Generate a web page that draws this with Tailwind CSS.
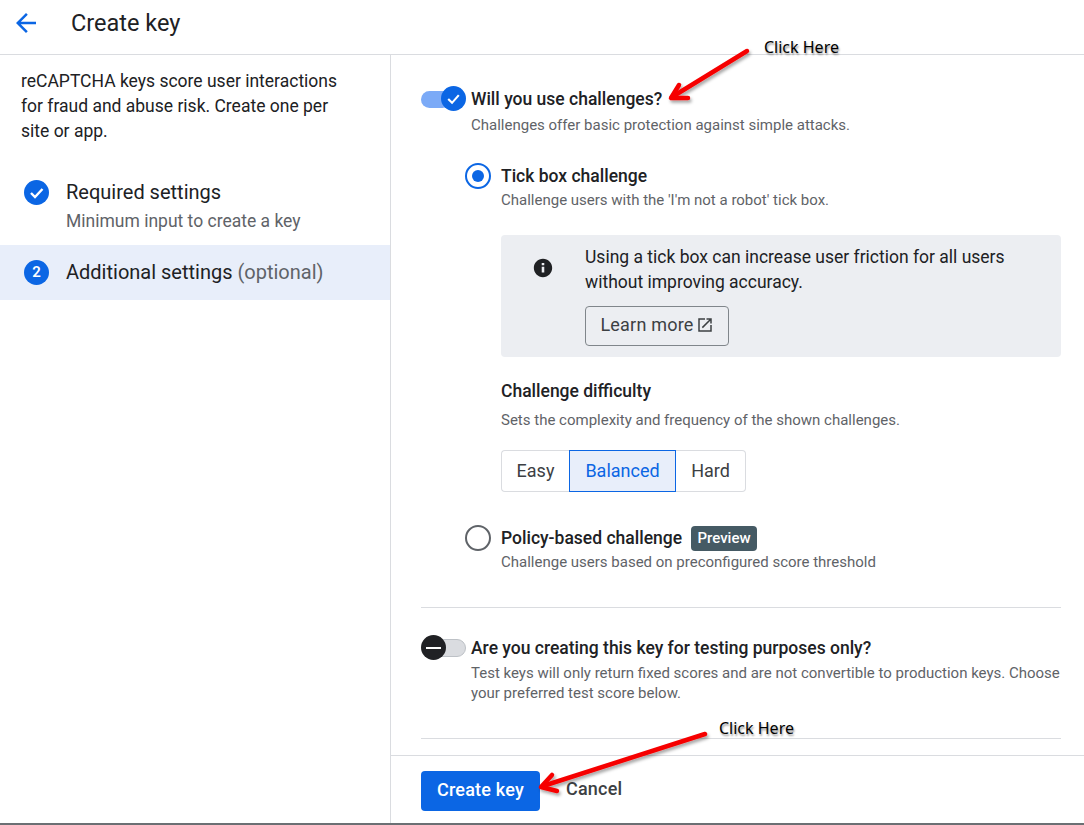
<!DOCTYPE html>
<html lang="en">
<head>
  <meta charset="UTF-8" />
  <title>Create key</title>
  <script src="https://cdn.jsdelivr.net/npm/@tailwindcss/browser@4"></script>
</head>
<body class="bg-white font-['Roboto',sans-serif] text-[#202124]">
<div class="relative w-[1084px] h-[825px] overflow-hidden flex flex-col">

  <!-- Header -->
  <header class="h-[55px] shrink-0 flex items-center border-b border-[#dadce0] pl-[11px] pb-[8px]">
    <svg class="w-[30px] h-[30px]" viewBox="0 0 24 24" fill="#0b66e4"><path d="M20 11H7.83l5.59-5.59L12 4l-8 8 8 8 1.41-1.41L7.83 13H20v-2z"/></svg>
    <h1 class="ml-[30px] text-[23.5px] leading-7">Create key</h1>
  </header>

  <div class="flex flex-1 min-h-0">
    <!-- Sidebar -->
    <aside class="w-[391px] shrink-0 border-r border-[#dadce0] pt-[14px]">
      <p class="px-[21px] w-[360px] text-[17.5px] leading-[25px]">reCAPTCHA keys score user interactions for fraud and abuse risk. Create one per site or app.</p>
      <div class="mt-[33px] h-[68px] flex pl-[24px]">
        <svg class="w-[25px] h-[25px] mt-[3px] shrink-0" viewBox="0 0 25 25"><circle cx="12.5" cy="12.5" r="12.5" fill="#0b66e4"/><path d="M7 13l4 4 7.5-8" fill="none" stroke="#fff" stroke-width="2.4"/></svg>
        <div class="ml-[17px]">
          <div class="text-[20px] leading-[30px]">Required settings</div>
          <div class="text-[17.5px] leading-[28px] text-[#5f6368]">Minimum input to create a key</div>
        </div>
      </div>
      <div class="h-[55px] flex items-center pl-[24px] bg-[#e8eefa]">
        <div class="w-[25px] h-[25px] rounded-full bg-[#0b66e4] text-white text-[15px] font-semibold flex items-center justify-center">2</div>
        <div class="ml-[17px] pb-px text-[20px]">Additional settings <span class="text-[#5f6368]">(optional)</span></div>
      </div>
    </aside>

    <!-- Main -->
    <main class="flex-1 flex flex-col min-w-0">
      <div class="flex-1 pl-[30px] pr-[23px] pt-[30px]">

        <div class="flex">
          <div class="relative w-[50px] h-7 shrink-0">
            <div class="absolute left-0 top-[6px] w-[30px] h-[17px] rounded-full bg-[#7baaf7]"></div>
            <svg class="absolute left-[20px] top-px w-[25px] h-[25px]" viewBox="0 0 26 26"><circle cx="13" cy="13" r="13" fill="#0b66e4"/><path d="M7.5 13.5l4 4 7-8" fill="none" stroke="#fff" stroke-width="2.2"/></svg>
          </div>
          <div>
            <div class="text-[17.5px] font-medium leading-7">Will you use challenges?</div>
            <div class="text-[15px] leading-[24px] text-[#5f6368]">Challenges offer basic protection against simple attacks.</div>
          </div>
        </div>

        <div class="ml-[44px] mt-[27px] flex">
          <div class="w-[26px] h-[26px] -mt-px shrink-0 rounded-full border-[2.5px] border-[#0b66e4] flex items-center justify-center">
            <div class="w-3 h-3 rounded-full bg-[#0b66e4]"></div>
          </div>
          <div class="ml-[10px] flex-1">
            <div class="text-[17.5px] font-medium leading-6">Tick box challenge</div>
            <div class="text-[15px] leading-6 text-[#5f6368]">Challenge users with the 'I'm not a robot' tick box.</div>

            <div class="mt-[23px] h-[122px] rounded bg-[#eceef2] flex pl-[31px] pt-[10px]">
              <svg class="w-[22px] h-[22px] mt-[12px] shrink-0" viewBox="0 0 24 24" fill="#202124"><path d="M12 2C6.48 2 2 6.48 2 12s4.48 10 10 10 10-4.48 10-10S17.52 2 12 2zm1.4 15h-2.8v-6.4h2.8V17zm0-8h-2.8V6.6h2.8V9z"/></svg>
              <div class="ml-[31px]">
                <p class="text-[17.5px] leading-[25px] w-[440px]">Using a tick box can increase user friction for all users without improving accuracy.</p>
                <div class="mt-[11px] w-[144px] h-10 pb-[2px] rounded border border-[#80868b] flex items-center justify-center text-lg tracking-[0.2px] text-[#3c4043]">
                  Learn more
                  <svg class="w-[18px] h-[18px] ml-[2px]" viewBox="0 0 24 24" fill="#3c4043"><path d="M19 19H5V5h7V3H3v18h18v-9h-2v7zM14 3v2h3.59l-9.83 9.83 1.41 1.41L19 6.41V10h2V3h-7z"/></svg>
                </div>
              </div>
            </div>

            <div class="mt-[22px] text-[17.5px] font-medium leading-6">Challenge difficulty</div>
            <div class="mt-[5px] text-[15px] leading-6 text-[#5f6368]">Sets the complexity and frequency of the shown challenges.</div>

            <div class="mt-[18px] inline-flex h-[42px] text-lg text-[#3c4043]">
              <div class="w-[68px] pb-px flex items-center justify-center rounded-l border border-r-0 border-[#dadce0]">Easy</div>
              <div class="w-[107px] pb-px flex items-center justify-center border border-[#0b66e4] bg-[#e8eefa] text-[#0b66e4]">Balanced</div>
              <div class="w-[70px] pb-px flex items-center justify-center rounded-r border border-l-0 border-[#dadce0]">Hard</div>
            </div>
          </div>
        </div>

        <div class="ml-[44px] mt-[34px] flex">
          <div class="w-[26px] h-[26px] -mt-px shrink-0 rounded-full border-[2px] border-[#5f6368]"></div>
          <div class="ml-[10px]">
            <div class="flex items-center h-6">
              <span class="text-[17.5px] font-medium">Policy-based challenge</span>
              <span class="ml-[9px] h-[25px] w-[66px] rounded-sm bg-[#455a64] text-white text-[15px] font-medium flex items-center justify-center">Preview</span>
            </div>
            <div class="text-[15px] leading-6 text-[#5f6368]">Challenge users based on preconfigured score threshold</div>
          </div>
        </div>

        <div class="mt-[33px] border-t border-[#dadce0]"></div>

        <div class="mt-[26px] flex">
          <div class="relative w-[50px] h-7 shrink-0">
            <div class="absolute left-[6px] top-[5px] w-[39px] h-[18px] rounded-full bg-[#dadce0] border border-[#bdc1c6]"></div>
            <div class="absolute left-0 top-px w-[25px] h-[25px] rounded-full bg-[#202124] flex items-center justify-center">
              <div class="w-[15px] h-[2px] bg-white"></div>
            </div>
          </div>
          <div>
            <div class="text-[17.5px] font-medium leading-7">Are you creating this key for testing purposes only?</div>
            <div class="text-[15px] leading-5 mt-px text-[#5f6368]">Test keys will only return fixed scores and are not convertible to production keys. Choose your preferred test score below.</div>
          </div>
        </div>

        <div class="mt-[35px] border-t border-[#dadce0]"></div>
      </div>

      <!-- Footer -->
      <footer class="h-[70px] shrink-0 border-t border-[#dadce0] pl-[30px] pt-[15px] flex items-start">
        <div class="w-[119px] h-10 pb-[2px] rounded bg-[#0b66e4] text-white text-lg tracking-[0.2px] font-medium flex items-center justify-center">Create key</div>
        <div class="ml-[26px] h-9 flex items-center text-lg tracking-[0.2px] font-medium text-[#3c4043]">Cancel</div>
      </footer>
    </main>
  </div>

  <div class="absolute left-0 bottom-0 w-full h-[2px] bg-[#6b6f73]"></div>

  <!-- Screenshot annotations -->
  <span class="absolute left-[764px] top-[37px] text-base leading-[20px] text-black font-['Noto_Sans',sans-serif] [text-shadow:1px_2px_2px_rgba(0,0,0,0.4)]">Click Here</span>
  <span class="absolute left-[719px] top-[718px] text-base leading-[20px] text-black font-['Noto_Sans',sans-serif] [text-shadow:1px_2px_2px_rgba(0,0,0,0.4)]">Click Here</span>
  <svg class="absolute inset-0 pointer-events-none" width="1084" height="825" viewBox="0 0 1084 825">
    <defs>
      <filter id="sh" x="-20%" y="-20%" width="140%" height="140%"><feDropShadow dx="1.5" dy="2.5" stdDeviation="1.8" flood-color="#000" flood-opacity="0.35"/></filter>
    </defs>
    <g filter="url(#sh)" fill="none" stroke="#f60000" stroke-width="4.5" stroke-linecap="round" stroke-linejoin="round">
      <path d="M747 51L672 97"/>
      <path d="M679 85L671 98L688 98"/>
      <path d="M705 734L543 786"/>
      <path d="M552 775L541 787L557 791"/>
    </g>
  </svg>
</div>
</body>
</html>
